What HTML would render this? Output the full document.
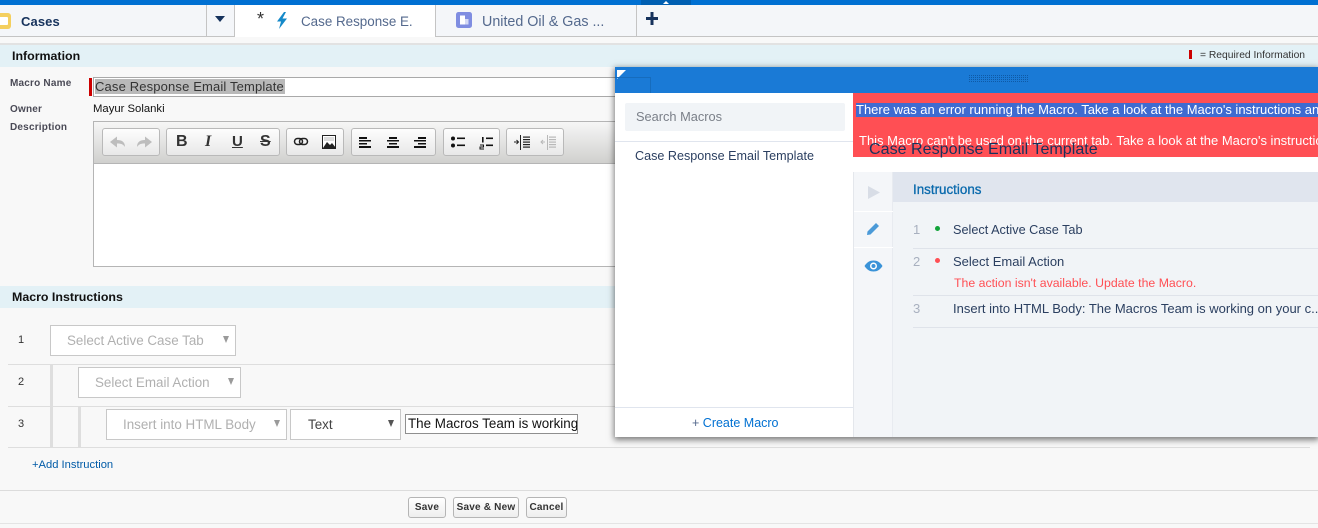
<!DOCTYPE html>
<html>
<head>
<meta charset="utf-8">
<style>
*{box-sizing:border-box;margin:0;padding:0}
html,body{width:1318px;height:528px;overflow:hidden;background:#f8f8f8;font-family:"Liberation Sans",sans-serif}
body{position:relative}
.a{position:absolute;white-space:nowrap}
.hl{height:1px;background:#dcdcdc}
.sel{position:absolute;background:#fff;border:1px solid #c8c8c8;color:#b0b0b0;font-size:13.4px;line-height:29px;white-space:nowrap}
.sel i{position:absolute;top:10px;width:0;height:0;border-left:3px solid transparent;border-right:3px solid transparent;border-top:7px solid #9a9a9a}
.grp{position:absolute;top:128px;height:28px;border:1px solid #b9b9b9;border-radius:3px;background:linear-gradient(#fdfdfd,#e8e8e8)}
.btn{position:absolute;top:497px;height:21px;border:1px solid #b5b5b5;border-radius:3px;background:linear-gradient(#fff,#eee);font-size:10px;font-weight:bold;color:#333;text-align:center;line-height:20px;letter-spacing:.2px}
.num{position:absolute;font-size:11px;color:#333;left:18px}
.mt{position:absolute;color:#2b3f60;font-size:13px;white-space:nowrap}
</style>
</head>
<body>
<!-- top bar -->
<div class="a" style="left:0;top:0;width:1318px;height:5px;background:#0070d2"></div>
<div class="a" style="left:641px;top:0;width:50px;height:5px;background:#005fb2"></div>
<div class="a" style="left:663px;top:1px;width:0;height:0;border-left:3px solid transparent;border-right:3px solid transparent;border-bottom:3px solid #fff"></div>

<!-- tab bar -->
<div class="a" style="left:0;top:5px;width:1318px;height:32px;background:#f4f6f9;border-bottom:1px solid #c4c4c4"></div>
<div class="a" style="left:206px;top:5px;width:1px;height:31px;background:#c4c4c4"></div>
<div class="a" style="left:234px;top:5px;width:202px;height:32px;background:#fff;border-left:1px solid #c4c4c4;border-right:1px solid #c4c4c4"></div>
<div class="a" style="left:636px;top:5px;width:1px;height:31px;background:#c4c4c4"></div>
<svg class="a" style="left:0;top:12px" width="12" height="18"><rect x="-6" y="1" width="17" height="16" rx="3" fill="#f4cf5e"/><rect x="-4" y="5" width="12" height="8" rx="1" fill="#fff"/></svg>
<div class="a" style="left:21px;top:14px;font-size:13px;font-weight:bold;color:#16325c;line-height:16px;letter-spacing:.1px">Cases</div>
<div class="a" style="left:215px;top:16px;width:0;height:0;border-left:5px solid transparent;border-right:5px solid transparent;border-top:6px solid #16325c"></div>
<div class="a" style="left:257px;top:10px;font-size:18px;color:#333;line-height:18px">*</div>
<svg class="a" style="left:276px;top:12px" width="12" height="17"><path d="M8 0L1 9.5h4L3 17l8-10.5H6.5L10 0z" fill="#1589c9"/></svg>
<div class="a" style="left:301px;top:14px;font-size:13.4px;color:#54698d;line-height:16px">Case Response E.</div>
<svg class="a" style="left:456px;top:12px" width="16" height="16"><rect width="16" height="16" rx="2.5" fill="#7f8de1"/><rect x="4" y="3.5" width="5" height="9" fill="#fff"/><rect x="9" y="7" width="3.5" height="5.5" fill="#d5daf5"/></svg>
<div class="a" style="left:482px;top:14px;font-size:14.3px;color:#54698d;line-height:16px">United Oil &amp; Gas ...</div>
<svg class="a" style="left:645px;top:11px" width="14" height="15"><path d="M7 1v13M1 7.500h12" stroke="#16325c" stroke-width="3"/></svg>

<div class="a hl" style="left:0;top:43px;width:1318px;height:2px;background:#e2e2e2"></div>

<!-- Information -->
<div class="a" style="left:0;top:45px;width:1318px;height:22px;background:#e3f1f6"></div>
<div class="a" style="left:12px;top:49px;font-size:12.4px;font-weight:bold;color:#111;line-height:15px">Information</div>
<div class="a" style="left:1189px;top:50px;width:3px;height:9px;background:#c00"></div>
<div class="a" style="left:1200px;top:50px;font-size:10.3px;color:#333;line-height:12px">= Required Information</div>

<div class="a" style="left:10px;top:78px;font-size:10px;font-weight:bold;color:#4a4a56;line-height:12px;letter-spacing:.2px">Macro Name</div>
<div class="a" style="left:89px;top:78px;width:3px;height:18px;background:#c00"></div>
<div class="a" style="left:93px;top:77px;width:540px;height:20px;background:#fff;border:1px solid #a9a9a9"></div>
<div class="a" style="left:95px;top:79px;width:190px;height:15px;background:#b9b9b9"></div>
<div class="a" style="left:95px;top:79px;font-size:13px;color:#333;line-height:15px;letter-spacing:.15px">Case Response Email Template</div>
<div class="a" style="left:10px;top:104px;font-size:10px;font-weight:bold;color:#4a4a56;line-height:12px;letter-spacing:.2px">Owner</div>
<div class="a" style="left:93px;top:103px;font-size:11.3px;color:#111;line-height:13px">Mayur Solanki</div>
<div class="a" style="left:10px;top:122px;font-size:10px;font-weight:bold;color:#4a4a56;line-height:12px;letter-spacing:.2px">Description</div>

<!-- Editor -->
<div class="a" style="left:93px;top:121px;width:540px;height:146px;background:#fff;border:1px solid #b5b5b5"></div>
<div class="a" style="left:94px;top:122px;width:538px;height:42px;background:linear-gradient(#f6f6f6,#d0d0ce);border-bottom:1px solid #b5b5b5"></div>
<div class="grp" style="left:102px;width:58px"></div>
<div class="grp" style="left:166px;width:114px"></div>
<div class="grp" style="left:286px;width:58px"></div>
<div class="grp" style="left:351px;width:85px"></div>
<div class="grp" style="left:443px;width:57px"></div>
<div class="grp" style="left:506px;width:58px"></div>
<svg class="a" style="left:102px;top:128px" width="470" height="28">
 <!-- undo/redo -->
 <path d="M8 14l7-5.500v3.500c5 0 8 2 8 7-2-3-4-3.500-8-3.500v4z" fill="#bdbdbd"/>
 <path d="M50 14l-7-5.500v3.500c-5 0-8 2-8 7 2-3 4-3.500 8-3.500v4z" fill="#bdbdbd"/>
 <!-- link -->
 <g fill="none" stroke="#222" stroke-width="1.500"><rect x="192.500" y="10.500" width="8" height="6" rx="3"/><rect x="197.500" y="10.500" width="8" height="6" rx="3"/></g>
 <!-- image -->
 <rect x="220.500" y="7.500" width="13" height="13" fill="#fff" stroke="#222"/><path d="M221 20l4-6 3 3 2-2 4 5z" fill="#222"/><rect x="222" y="9" width="10" height="4" fill="#ddd"/>
 <!-- align -->
 <g fill="#111"><rect x="257" y="9" width="8" height="2"/><rect x="257" y="12" width="12" height="1.500"/><rect x="257" y="15" width="8" height="1.500"/><rect x="257" y="18" width="12" height="2"/>
 <rect x="287" y="9" width="8" height="2"/><rect x="285" y="12" width="12" height="1.500"/><rect x="287" y="15" width="8" height="1.500"/><rect x="285" y="18" width="12" height="2"/>
 <rect x="316" y="9" width="8" height="2"/><rect x="312" y="12" width="12" height="1.500"/><rect x="316" y="15" width="8" height="1.500"/><rect x="312" y="18" width="12" height="2"/>
 <!-- lists -->
 <circle cx="351" cy="10.500" r="2"/><circle cx="351" cy="17.500" r="2"/><rect x="355" y="9.500" width="8" height="1.600"/><rect x="355" y="16.500" width="8" height="1.600"/>
 <rect x="380" y="9" width="1.600" height="5.500"/><path d="M378 17h3.500v2H378v2h4" fill="none" stroke="#111" stroke-width="1"/>
 <rect x="384" y="9.500" width="7" height="1.600"/><rect x="384" y="16.500" width="7" height="1.600"/></g>
 <!-- indent -->
 <g fill="#222"><rect x="418" y="7" width="1" height="15"/><rect x="421" y="8.500" width="7" height="1.200"/><rect x="421" y="11" width="7" height="1.200"/><rect x="421" y="13.500" width="7" height="1.200"/><rect x="421" y="16" width="7" height="1.200"/><rect x="421" y="18.500" width="7" height="1.200"/><path d="M412 14h4M414.500 12l2 2-2 2" stroke="#222" fill="none"/></g>
 <g fill="#b8b8b8"><rect x="445" y="7" width="1" height="15"/><rect x="447" y="8.500" width="7" height="1.200"/><rect x="447" y="11" width="7" height="1.200"/><rect x="447" y="13.500" width="7" height="1.200"/><rect x="447" y="16" width="7" height="1.200"/><rect x="447" y="18.500" width="7" height="1.200"/><path d="M443 14h-4M441 12l-2 2 2 2" stroke="#b8b8b8" fill="none"/></g>
</svg>
<div class="a" style="left:176px;top:134px;font-size:16px;font-weight:bold;color:#333;line-height:16px">B</div>
<div class="a" style="left:205px;top:134px;font-size:16px;font-weight:bold;font-style:italic;color:#333;line-height:16px;font-family:'Liberation Serif',serif">I</div>
<div class="a" style="left:232px;top:134px;font-size:15px;font-weight:bold;color:#333;line-height:16px;text-decoration:underline">U</div>
<div class="a" style="left:260px;top:134px;font-size:16px;font-weight:bold;color:#333;line-height:16px;text-decoration:line-through">S</div>

<!-- Macro Instructions -->
<div class="a" style="left:0;top:286px;width:1318px;height:22px;background:#e3f1f6"></div>
<div class="a" style="left:12px;top:290px;font-size:12.4px;font-weight:bold;color:#111;line-height:15px">Macro Instructions</div>

<div class="num" style="top:334px">1</div>
<div class="sel" style="left:50px;top:325px;width:186px;height:31px;padding-left:16px">Select Active Case Tab<i style="left:172px"></i></div>
<div class="a hl" style="left:8px;top:364px;width:1302px;background:#dedede"></div>
<div class="num" style="top:376px">2</div>
<div class="a" style="left:50px;top:365px;width:3px;height:82px;background:#dedede"></div>
<div class="sel" style="left:78px;top:367px;width:163px;height:31px;padding-left:16px">Select Email Action<i style="left:149px"></i></div>
<div class="a hl" style="left:8px;top:406px;width:1302px;background:#dedede"></div>
<div class="num" style="top:418px">3</div>
<div class="a" style="left:78px;top:407px;width:3px;height:40px;background:#dedede"></div>
<div class="sel" style="left:106px;top:409px;width:181px;height:31px;padding-left:16px">Insert into HTML Body<i style="left:167px"></i></div>
<div class="sel" style="left:290px;top:409px;width:111px;height:31px;padding-left:17px;color:#444">Text<i style="left:97px;border-top-color:#555"></i></div>
<div class="a" style="left:405px;top:414px;width:173px;height:20px;background:#fff;border:1px solid #8f8f8f;font-size:13.4px;line-height:18px;color:#111;padding-left:2px;overflow:hidden">The Macros Team is working</div>
<div class="a hl" style="left:8px;top:447px;width:1302px;background:#dedede"></div>
<div class="a" style="left:32px;top:459px;font-size:11.2px;color:#015ba7;line-height:13px">+Add Instruction</div>

<!-- footer -->
<div class="a" style="left:0;top:490px;width:1318px;height:1px;background:#dcdcdc"></div>
<div class="btn" style="left:408px;width:38px">Save</div>
<div class="btn" style="left:453px;width:66px">Save &amp; New</div>
<div class="btn" style="left:526px;width:41px">Cancel</div>
<div class="a" style="left:0;top:523px;width:1318px;height:1px;background:#e4e4e4"></div>

<!-- Modal -->
<div class="a" style="left:615px;top:67px;width:703px;height:370px;background:#f1f4f7;box-shadow:0 2px 6px 1px rgba(0,0,0,.5);overflow:hidden">
  <div class="a" style="left:0;top:0;width:703px;height:26px;background:#1a7ad6"></div>
  <div class="a" style="left:2px;top:3px;width:0;height:0;border-top:9px solid #fff;border-right:9px solid transparent"></div>
  <div class="a" style="left:0;top:10px;width:36px;height:16px;border:1px solid #166cbd;border-left:0;border-bottom:0"></div>
  <svg class="a" style="left:354px;top:8px" width="60" height="7"><defs><pattern id="g" width="2" height="2" patternUnits="userSpaceOnUse"><rect width="1" height="1" fill="#0f5aa6"/></pattern></defs><rect width="60" height="7" fill="url(#g)"/></svg>
  <!-- left panel -->
  <div class="a" style="left:0;top:26px;width:239px;height:344px;background:#fff;border-right:1px solid #e4e7ec"></div>
  <div class="a" style="left:10px;top:36px;width:220px;height:28px;background:#f1f4f7;border-radius:2px;font-size:12.8px;color:#7a7f88;line-height:28px;padding-left:11px">Search Macros</div>
  <div class="a" style="left:0;top:74px;width:238px;height:1px;background:#e0e5ee"></div>
  <div class="a" style="left:20px;top:82px;font-size:12.6px;color:#2b3f60;line-height:15px">Case Response Email Template</div>
  <div class="a" style="left:0;top:340px;width:238px;height:1px;background:#e0e5ee"></div>
  <div class="a" style="left:77px;top:349px;font-size:12.5px;color:#0070d2;line-height:15px"><span style="color:#54698d">+</span> Create Macro</div>
  <!-- right -->
  <div class="a" style="left:238px;top:26px;width:465px;height:64px;background:#ff4f54"></div>
  <div class="a" style="left:241px;top:36px;width:462px;height:14px;background:#3f6bd0"></div>
  <div class="a" style="left:241px;top:34px;font-size:13px;color:#fff;line-height:17px">There was an error running the Macro. Take a look at the Macro's instructions and try again.</div>
  <div class="a" style="left:244px;top:65px;font-size:13px;color:#fff;line-height:17px">This Macro can't be used on the current tab. Take a look at the Macro's instructions and try again.</div>
  <div class="a" style="left:238px;top:90px;width:465px;height:15px;background:#fff"></div>
  <div class="a" style="left:254px;top:72px;font-size:16.1px;color:#16325c;line-height:20px">Case Response Email Template</div>
  <!-- rail -->
  <div class="a" style="left:239px;top:105px;width:39px;height:265px;background:#f4f6f9;border-right:1px solid #e8ebf0"></div>
  <div class="a" style="left:239px;top:144px;width:39px;height:1px;background:#fff"></div>
  <div class="a" style="left:239px;top:180px;width:39px;height:1px;background:#fff"></div>
  <svg class="a" style="left:252px;top:118px" width="14" height="15"><path d="M1 1l12 6.500L1 14z" fill="#d8dde6"/></svg>
  <svg class="a" style="left:251px;top:155px" width="14" height="14"><path d="M10 1l3 3-8.500 8.500L1 13l.5-3.500z" fill="#4b9ad8"/></svg>
  <svg class="a" style="left:249px;top:192px" width="19" height="14"><path d="M.5 7C3 3 6 1.500 9.500 1.500S16 3 18.500 7C16 11 13 12.500 9.500 12.500S3 11 .5 7z" fill="#3a93d8"/><circle cx="9.500" cy="7" r="3.500" fill="#fff"/><circle cx="9.500" cy="7" r="2" fill="#3a93d8"/></svg>
  <!-- instructions -->
  <div class="a" style="left:278px;top:105px;width:425px;height:30px;background:#e0e5ee"></div>
  <div class="a" style="left:298px;top:115px;font-size:13.4px;color:#0a6aad;line-height:15px;-webkit-text-stroke:.3px #0a6aad">Instructions</div>
  <div class="a" style="left:298px;top:155px;font-size:13px;color:#a8b0bf;line-height:15px">1</div>
  <div class="a" style="left:320px;top:159px;width:5px;height:5px;border-radius:50%;background:#12a33a"></div>
  <div class="mt" style="left:338px;top:156px;line-height:15px;font-size:12.7px">Select Active Case Tab</div>
  <div class="a" style="left:298px;top:181px;width:405px;height:1px;background:#dfe3ea"></div>
  <div class="a" style="left:298px;top:187px;font-size:13px;color:#a8b0bf;line-height:15px">2</div>
  <div class="a" style="left:320px;top:191px;width:5px;height:5px;border-radius:50%;background:#ff4f54"></div>
  <div class="mt" style="left:338px;top:187px;line-height:15px">Select Email Action</div>
  <div class="a" style="left:339px;top:209px;font-size:12.3px;color:#ff4f54;line-height:15px">The action isn't available. Update the Macro.</div>
  <div class="a" style="left:298px;top:228px;width:405px;height:1px;background:#dfe3ea"></div>
  <div class="a" style="left:298px;top:234px;font-size:13px;color:#a8b0bf;line-height:15px">3</div>
  <div class="mt" style="left:338px;top:234px;line-height:15px">Insert into HTML Body: The Macros Team is working on your c...</div>
  <div class="a" style="left:298px;top:260px;width:405px;height:1px;background:#dfe3ea"></div>
</div>
</body>
</html>
